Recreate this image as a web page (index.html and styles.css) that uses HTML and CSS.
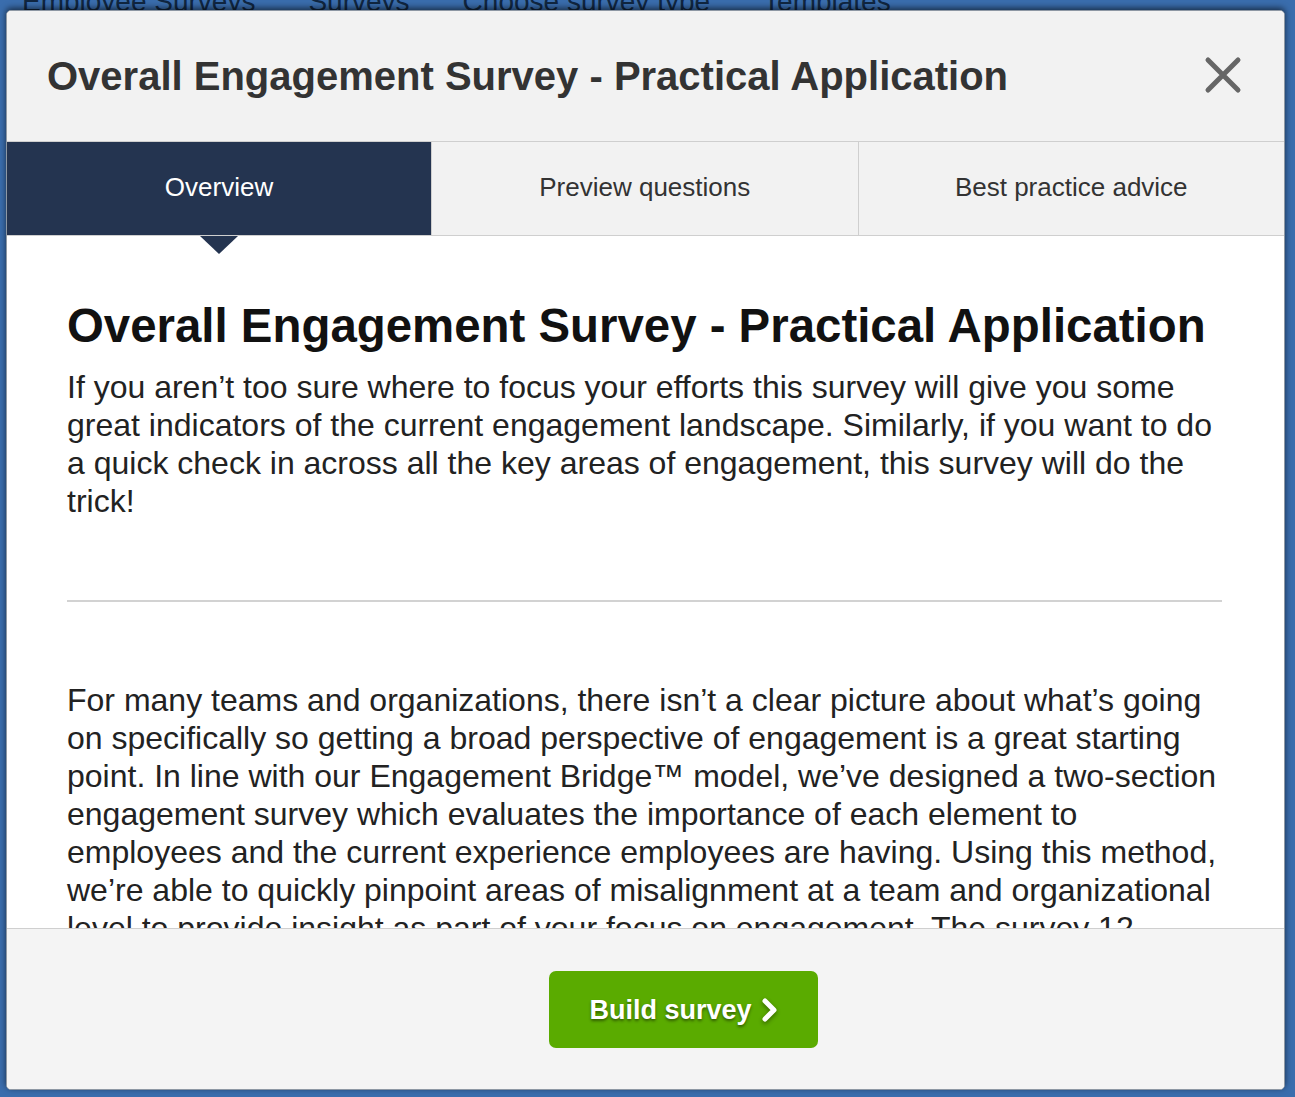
FILE: index.html
```html
<!DOCTYPE html>
<html lang="en">
<head>
<meta charset="utf-8">
<title>Overall Engagement Survey - Practical Application</title>
<link rel="stylesheet" href="styles.css">
</head>
<body>
<nav class="crumbs">
  <span>Employee Surveys</span>
  <span>Surveys</span>
  <span>Choose survey type</span>
  <span>Templates</span>
</nav>

<div class="modal">
  <header class="modal-header">
    <h1 class="modal-title">Overall Engagement Survey - Practical Application</h1>
    <button class="close" aria-label="Close">
      <svg width="38" height="38" viewBox="0 0 38 38"><path d="M4 4 L34 34 M34 4 L4 34" stroke="#666" stroke-width="5" stroke-linecap="round" fill="none"/></svg>
    </button>
  </header>

  <div class="tabs">
    <div class="tab active">Overview<span class="tab-arrow"></span></div>
    <div class="tab">Preview questions</div>
    <div class="tab">Best practice advice</div>
  </div>

  <div class="content">
    <h2 class="content-title">Overall Engagement Survey - Practical Application</h2>
    <p class="text">If you aren’t too sure where to focus your efforts this survey will give you some great indicators of the current engagement landscape. Similarly, if you want to do a quick check in across all the key areas of engagement, this survey will do the trick!</p>
    <hr class="divider">
    <p class="text">For many teams and organizations, there isn’t a clear picture about what’s going on specifically so getting a broad perspective of engagement is a great starting point. In line with our Engagement Bridge™ model, we’ve designed a two-section engagement survey which evaluates the importance of each element to employees and the current experience employees are having. Using this method, we’re able to quickly pinpoint areas of misalignment at a team and organizational level to provide insight as part of your focus on engagement. The survey 12 questions cover each of the key elements of engagement.</p>
  </div>

  <footer class="modal-footer">
    <button class="build">Build survey
      <svg width="16" height="24" viewBox="0 0 16 24"><path d="M3 3 L12 12 L3 21" stroke="#fff" stroke-width="5" stroke-linecap="round" stroke-linejoin="round" fill="none"/></svg>
    </button>
  </footer>
</div>
</body>
</html>
```

FILE: styles.css
```css
html, body {
  margin: 0;
  padding: 0;
}

body {
  width: 1295px;
  height: 1097px;
  overflow: hidden;
  background: #3a6dad;
  font-family: "Liberation Sans", Arial, Helvetica, sans-serif;
  position: relative;
}

.crumbs {
  display: flex;
  gap: 53px;
  margin-top: -14px;
  padding-left: 22px;
  font-size: 28px;
  line-height: 32px;
  color: #102641;
}

.modal {
  position: absolute;
  left: 6px;
  top: 10px;
  width: 1277px;
  height: 1078px;
  border: 1px solid #8e98a4;
  border-radius: 5px;
  overflow: hidden;
  display: flex;
  flex-direction: column;
  background: #fff;
  box-shadow: 0 -2px 6px rgba(0, 0, 0, 0.6);
}

.modal-header {
  height: 130px;
  flex: none;
  display: flex;
  align-items: center;
  justify-content: space-between;
  padding: 0 40px 0 40px;
  background: #f2f2f2;
  border-bottom: 1px solid #cfcfcf;
}

.modal-title {
  margin: 0;
  font-size: 40px;
  font-weight: bold;
  color: #333;
  line-height: 48px;
}

.close {
  border: 0;
  background: none;
  padding: 0;
  width: 38px;
  height: 38px;
  margin-right: 2px;
  margin-bottom: 2px;
  cursor: pointer;
}

.close svg {
  display: block;
}

.tabs {
  flex: none;
  display: grid;
  grid-template-columns: 424px 1fr 1fr;
  height: 93px;
  border-bottom: 1px solid #cfcfcf;
  background: #f2f2f2;
}

.tab {
  position: relative;
  display: flex;
  align-items: center;
  justify-content: center;
  font-size: 26px;
  color: #333;
  border-left: 1px solid #cfcfcf;
  padding-bottom: 2px;
}

.tab:first-child {
  border-left: 0;
}

.tab.active {
  background: #243450;
  color: #fff;
}

.tab-arrow {
  position: absolute;
  left: 50%;
  bottom: -19px;
  margin-left: -19px;
  width: 0;
  height: 0;
  border-left: 19px solid transparent;
  border-right: 19px solid transparent;
  border-top: 18px solid #243450;
  z-index: 2;
}

.content {
  flex: 1;
  overflow: hidden;
  padding: 64px 62px 0 60px;
  background: #fff;
}

.content-title {
  margin: 0 0 16px;
  font-size: 47.4px;
  line-height: 52px;
  font-weight: bold;
  color: #111;
}

.text {
  margin: 0;
  font-size: 32px;
  line-height: 38px;
  color: #222;
}

.divider {
  margin: 80px 0 79px;
  border: 0;
  border-top: 2px solid #d2d2d2;
  height: 0;
}

.modal-footer {
  flex: none;
  height: 160px;
  border-top: 1px solid #cfcfcf;
  background: #f4f4f4;
  display: flex;
  align-items: center;
  justify-content: center;
}

.build {
  margin-left: 76px;
  width: 269px;
  height: 77px;
  border: 0;
  border-radius: 7px;
  background: #5aab00;
  color: #fff;
  font-family: "Liberation Sans", Arial, Helvetica, sans-serif;
  font-size: 27px;
  font-weight: bold;
  text-shadow: 0 2px 3px rgba(0, 0, 0, 0.45);
  display: flex;
  align-items: center;
  justify-content: center;
  gap: 10px;
  padding: 2px 0 0 0;
  cursor: pointer;
}

.build svg {
  display: block;
  filter: drop-shadow(0 2px 2px rgba(0, 0, 0, 0.4));
}
```
